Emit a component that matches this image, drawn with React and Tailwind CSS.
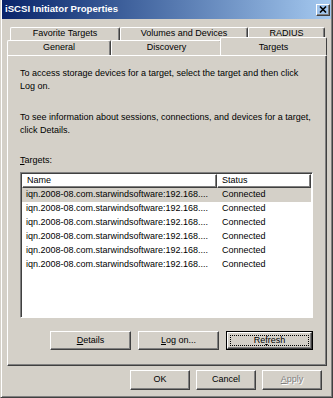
import React from "react";

const raised =
  "border border-t-white border-l-white border-r-[#404040] border-b-[#404040] shadow-[inset_-1px_-1px_0_#808080]";
const sunken =
  "border border-t-[#808080] border-l-[#808080] border-r-white border-b-white shadow-[inset_1px_1px_0_#404040]";

const rows = Array.from({ length: 6 }, (_, i) => i);

function Button({ children, className = "", focused = false, disabled = false }) {
  if (focused) {
    return (
      <div className={`border border-black ${className}`}>
        <div className={`${raised} h-full flex items-center justify-center bg-[#d4d0c8] p-[2px]`}>
          <div className="w-full h-full border border-dotted border-black flex items-center justify-center">
            {children}
          </div>
        </div>
      </div>
    );
  }
  return (
    <div
      className={`${raised} bg-[#d4d0c8] flex items-center justify-center ${
        disabled ? "text-[#808080] [text-shadow:1px_1px_0_#fff]" : ""
      } ${className}`}
    >
      {children}
    </div>
  );
}

function Tab({ label, className = "" }) {
  return (
    <div
      className={`border-t border-l border-r border-t-white border-l-white border-r-[#404040] rounded-t-[2px] shadow-[inset_-1px_0_0_#808080] flex items-center justify-center bg-[#d4d0c8] ${className}`}
    >
      {label}
    </div>
  );
}

export default function App() {
  return (
    <div className="w-[333px] h-[398px] bg-[#d4d0c8] font-['Liberation_Sans',Arial,sans-serif] text-[9px] text-black overflow-hidden">
      <div className="w-full h-full flex flex-col border border-t-0 border-l-[#d4d0c8] border-r-[#404040] border-b-[#404040] shadow-[inset_1px_0_0_#fff,inset_-1px_-1px_0_#808080] px-[2px] pb-[2px]">
        {/* Title bar */}
        <div className="h-[19px] flex items-center justify-between bg-gradient-to-r from-[#0a246a] to-[#a6caf0] pl-[3px] pr-[1px] -mx-[1px]">
          <span className="text-white font-bold text-[9.6px]">iSCSI Initiator Properties</span>
          <div className={`${raised} w-[14px] h-[12px] flex items-center justify-center`}>
            <svg width="8" height="7" viewBox="0 0 8 7">
              <path d="M1 0.5 L7 6.5 M7 0.5 L1 6.5" stroke="#000" strokeWidth="1.6" />
            </svg>
          </div>
        </div>

        {/* Tabs */}
        <div className="mt-[8px] ml-[4px] w-[320px] flex flex-col">
          <div className="flex ml-[3px] h-[13px]">
            <Tab label="Favorite Targets" className="w-[110px]" />
            <Tab label="Volumes and Devices" className="w-[128px]" />
            <Tab label="RADIUS" className="w-[77px]" />
          </div>
          <div className="flex h-[15px]">
            <Tab label="General" className="w-[104px]" />
            <Tab label="Discovery" className="w-[111px]" />
            <Tab
              label="Targets"
              className="relative z-10 w-[107px] h-[18px] -mt-[3px] -ml-[2px] items-start pt-[3px] shadow-none"
            />
          </div>

          {/* Panel */}
          <div className={`${raised} h-[311px] flex flex-col pl-[12px] pr-[13px]`}>
            <p className="mt-[11px] leading-[13px]">
              To access storage devices for a target, select the target and then click
              <br />
              Log on.
            </p>
            <p className="mt-[18px] leading-[13px]">
              To see information about sessions, connections, and devices for a target,
              <br />
              click Details.
            </p>
            <p className="mt-[17px] leading-[13px]">
              <span className="underline">T</span>argets:
            </p>
            <div className={`${sunken} mt-[5px] h-[146px] bg-white p-[1px] flex flex-col`}>
              <div className="flex h-[14px] shrink-0">
                <div className={`${raised} w-[195px] pl-[4px] flex items-center`}>Name</div>
                <div className={`${raised} flex-1 pl-[4px] flex items-center`}>Status</div>
              </div>
              {rows.map((i) => (
                <div
                  key={i}
                  className={`flex h-[14px] items-center ${i === 0 ? "bg-[#d4d0c8]" : ""}`}
                >
                  <div className="w-[195px] pl-[4px] whitespace-nowrap overflow-hidden">
                    iqn.2008-08.com.starwindsoftware:192.168....
                  </div>
                  <div className="pl-[5px]">Connected</div>
                </div>
              ))}
            </div>
            <div className="mt-[13px] flex justify-end gap-[7px]">
              <Button className="w-[81px] h-[19px]">
                <span><span className="underline">D</span>etails</span>
              </Button>
              <Button className="w-[81px] h-[19px]">
                <span><span className="underline">L</span>og on...</span>
              </Button>
              <Button focused className="w-[87px] h-[19px]">
                <span>Re<span className="underline">f</span>resh</span>
              </Button>
            </div>
          </div>
        </div>

        {/* Dialog buttons */}
        <div className="mt-[4px] flex justify-end gap-[6px] pr-[8px]">
          <Button className="w-[60px] h-[20px]">OK</Button>
          <Button className="w-[60px] h-[20px]">Cancel</Button>
          <Button disabled className="w-[60px] h-[20px]">
            <span><span className="underline">A</span>pply</span>
          </Button>
        </div>
      </div>
    </div>
  );
}
